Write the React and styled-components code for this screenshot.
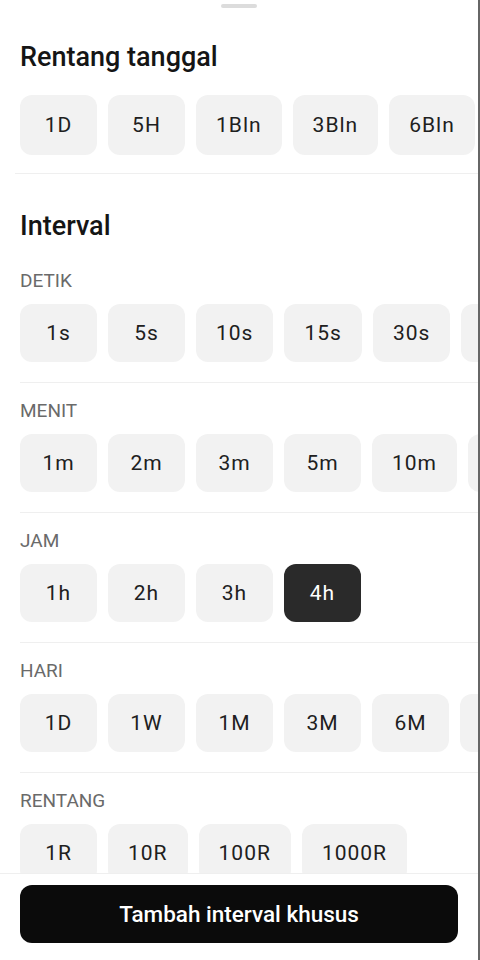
import React from 'react';
import styled, { createGlobalStyle } from 'styled-components';

const GlobalStyle = createGlobalStyle`
  * { box-sizing: border-box; }
  html, body { margin: 0; padding: 0; background: #fff; }
  body { font-family: Roboto, 'Noto Sans', sans-serif; -webkit-font-smoothing: antialiased; }
`;

const Sheet = styled.div`
  display: flex;
  flex-direction: column;
  height: 100vh;
  background: #fff;
  border-right: 2px solid #666;
  overflow: hidden;
`;

const Scroll = styled.div`
  flex: 1;
  overflow: hidden;
`;

const Handle = styled.div`
  width: 36px;
  height: 4px;
  border-radius: 2px;
  background: #dcdcdc;
  margin: 4px auto 0;
`;

const Title = styled.h2`
  margin: ${p => p.$top}px 0 0 20px;
  font-size: 27px;
  line-height: 30px;
  font-weight: 500;
  color: #151515;
`;

const Label = styled.div`
  margin: ${p => p.$top}px 0 0 20px;
  font-size: 19px;
  line-height: 22px;
  font-weight: 400;
  color: #6a6a6a;
`;

const Row = styled.div`
  display: flex;
  gap: 11px;
  margin-top: ${p => p.$top}px;
  padding-left: 20px;
  overflow: hidden;
`;

const Chip = styled.button`
  flex: none;
  height: ${p => p.$h || 58}px;
  min-width: 77px;
  padding: 0 20px;
  border: none;
  border-radius: 12px;
  background: ${p => (p.$active ? '#2a2a2a' : '#f2f2f2')};
  color: ${p => (p.$active ? '#fff' : '#202020')};
  font-family: Roboto, sans-serif;
  font-size: 21px;
  font-weight: 400;
  letter-spacing: 1px;
  display: flex;
  align-items: center;
  justify-content: center;
`;

const Divider = styled.div`
  height: 1px;
  background: #efefef;
  margin: ${p => p.$top}px 0 0 ${p => p.$left ?? 20}px;
`;

const Footer = styled.div`
  flex: none;
  border-top: 1px solid #efefef;
  padding: 11px 20px 17px;
  background: #fff;
`;

const MainButton = styled.button`
  width: 100%;
  height: 58px;
  border: none;
  border-radius: 12px;
  background: #0b0b0b;
  color: #fff;
  font-family: Roboto, sans-serif;
  font-size: 22.5px;
  font-weight: 500;
`;

const ranges = ['1D', '5H', '1Bln', '3Bln', '6Bln'];

const groups = [
  { label: 'DETIK', items: ['1s', '5s', '10s', '15s', '30s', '45s'] },
  { label: 'MENIT', items: ['1m', '2m', '3m', '5m', '10m', '15m'] },
  { label: 'JAM', items: ['1h', '2h', '3h', '4h'], active: '4h' },
  { label: 'HARI', items: ['1D', '1W', '1M', '3M', '6M', '1Y'] },
  { label: 'RENTANG', items: ['1R', '10R', '100R', '1000R'] },
];

export default function App() {
  return (
    <Sheet>
      <GlobalStyle />
      <Scroll>
        <Handle />
        <Title $top={34}>Rentang tanggal</Title>
        <Row $top={23}>
          {ranges.map(r => (
            <Chip key={r} $h={60}>{r}</Chip>
          ))}
        </Row>
        <Divider $top={18} $left={15} />
        <Title $top={37}>Interval</Title>
        {groups.map((g, i) => (
          <React.Fragment key={g.label}>
            {i > 0 && <Divider $top={20} />}
            <Label $top={i === 0 ? 29 : 17}>{g.label}</Label>
            <Row $top={12}>
              {g.items.map(it => (
                <Chip key={it} $active={it === g.active}>{it}</Chip>
              ))}
            </Row>
          </React.Fragment>
        ))}
      </Scroll>
      <Footer>
        <MainButton>Tambah interval khusus</MainButton>
      </Footer>
    </Sheet>
  );
}
